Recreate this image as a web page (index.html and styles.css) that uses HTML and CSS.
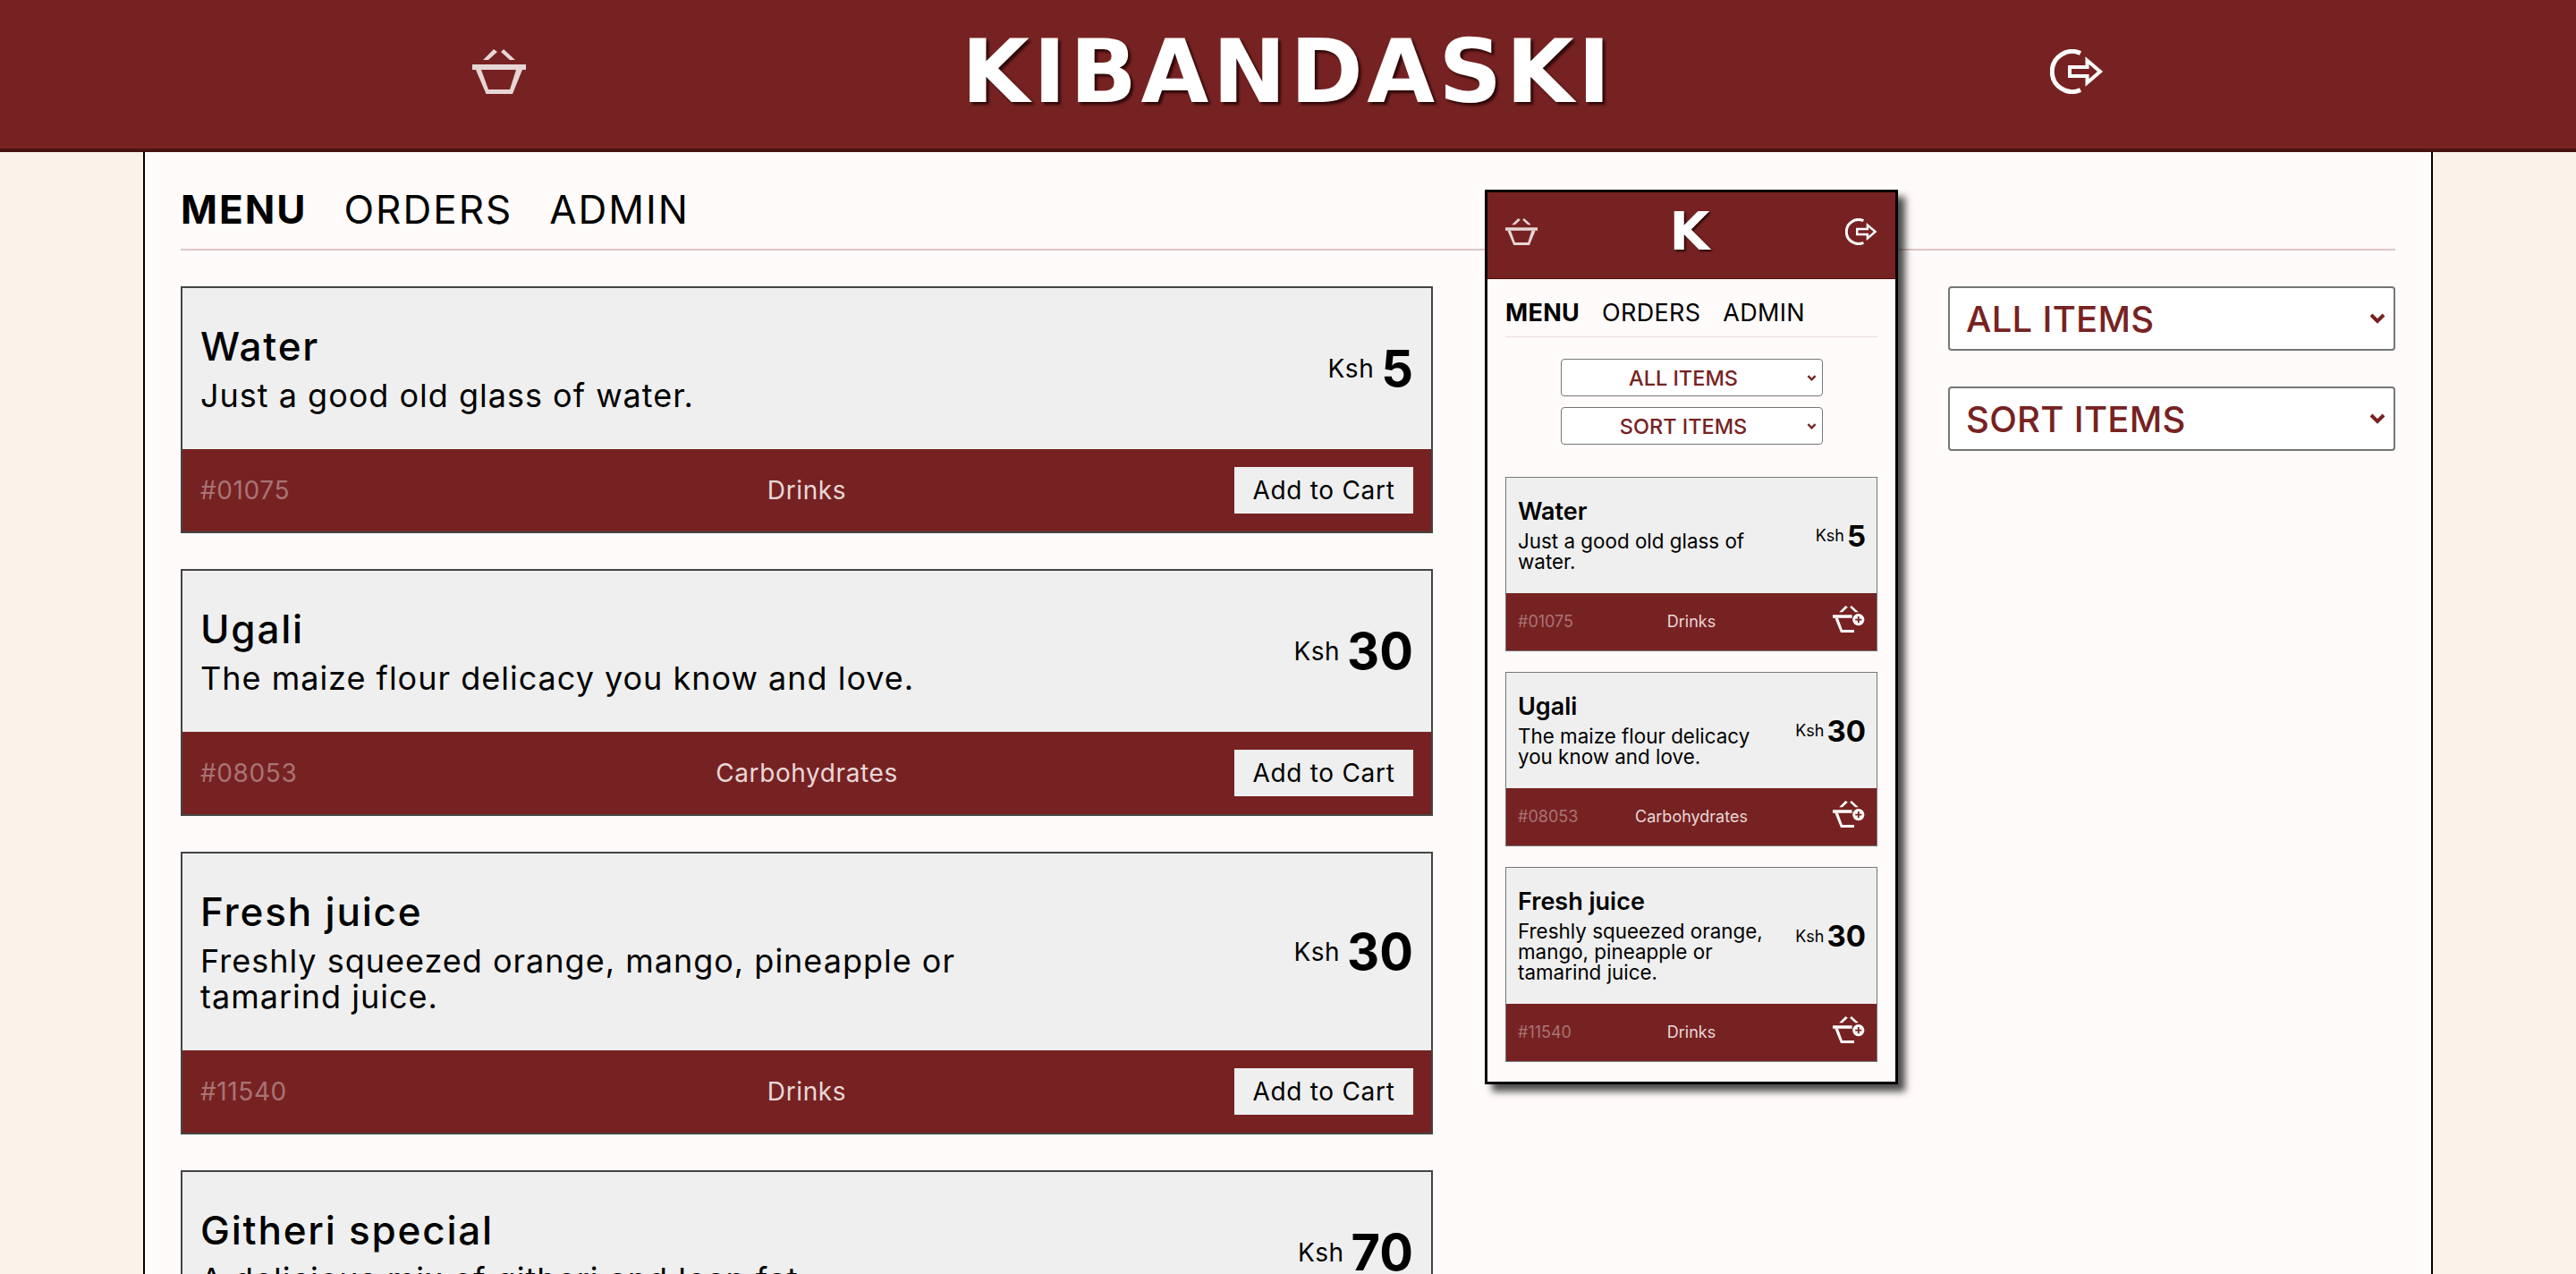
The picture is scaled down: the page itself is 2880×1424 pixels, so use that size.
FILE: index.html
```html
<!DOCTYPE html>
<html lang="en">
<head>
    <meta charset="UTF-8">
    <title>Kibandaski</title>
    <link rel="stylesheet" href="styles.css">
</head>
<body>
    <svg class="icon-defs" width="0" height="0">
        <symbol id="basket" viewBox="0 0 60 50">
            <path d="M12 12h6L28 3 24 0zM32 3l3-3 13 12h-6zM0 17h60v6H0z"/>
            <path fill-rule="evenodd" d="M4 23l11.500 27H45l11-27h-7l-7 22H18L10 23z"/>
        </symbol>
        <symbol id="basket-add" viewBox="0 0 60 50">
            <path d="M12 12h6L28 3 24 0zM32 3l3-3 13 12h-6zM0 17h36v6H0z"/>
            <path d="M4 23h6l8 22h22v5H15z"/>
            <circle cx="48" cy="26" r="11"/>
            <path class="plus" d="M46.500 20h3v4.500H54v3h-4.500V32h-3v-4.500H42v-3h4.500z"/>
        </symbol>
        <symbol id="exit" viewBox="0 0 60 50">
            <path class="line" d="M34 4.500A22.500 22.500 0 1 0 34 45.500"/>
            <path class="line thin" d="M22 20h19.500v-7.500L56 25 41.500 37.500V30H22z"/>
        </symbol>
    </svg>

    <header class="topbar">
        <svg class="topbar-icon dim"><use href="#basket"/></svg>
        <h1 class="logo">KIBANDASKI</h1>
        <svg class="topbar-icon"><use href="#exit"/></svg>
    </header>

    <div class="page">
        <nav class="tabs">
            <a class="active">MENU</a>
            <a>ORDERS</a>
            <a>ADMIN</a>
        </nav>

        <div class="columns">
            <main class="menu-list">
                <article class="card">
                    <div class="card-body">
                        <div class="card-text">
                            <h2>Water</h2>
                            <p>Just a good old glass of water.</p>
                        </div>
                        <div class="price"><span>Ksh</span><b>5</b></div>
                    </div>
                    <div class="card-foot">
                        <span class="code">#01075</span>
                        <span class="category">Drinks</span>
                        <button class="add-btn">Add to Cart</button>
                    </div>
                </article>
                <article class="card">
                    <div class="card-body">
                        <div class="card-text">
                            <h2>Ugali</h2>
                            <p>The maize flour delicacy you know and love.</p>
                        </div>
                        <div class="price"><span>Ksh</span><b>30</b></div>
                    </div>
                    <div class="card-foot">
                        <span class="code">#08053</span>
                        <span class="category">Carbohydrates</span>
                        <button class="add-btn">Add to Cart</button>
                    </div>
                </article>
                <article class="card">
                    <div class="card-body">
                        <div class="card-text">
                            <h2>Fresh juice</h2>
                            <p>Freshly squeezed orange, mango, pineapple or tamarind juice.</p>
                        </div>
                        <div class="price"><span>Ksh</span><b>30</b></div>
                    </div>
                    <div class="card-foot">
                        <span class="code">#11540</span>
                        <span class="category">Drinks</span>
                        <button class="add-btn">Add to Cart</button>
                    </div>
                </article>
                <article class="card">
                    <div class="card-body">
                        <div class="card-text">
                            <h2>Githeri special</h2>
                            <p>A delicious mix of githeri and lean fat.</p>
                        </div>
                        <div class="price"><span>Ksh</span><b>70</b></div>
                    </div>
                </article>
            </main>

            <aside class="filters">
                <select><option>ALL ITEMS</option></select>
                <select><option>SORT ITEMS</option></select>
            </aside>
        </div>

        <section class="phone">
            <div class="phone-bar">
                <svg class="phone-icon dim"><use href="#basket"/></svg>
                <span class="phone-logo">K</span>
                <svg class="phone-icon"><use href="#exit"/></svg>
            </div>
            <div class="phone-page">
                <nav class="phone-tabs">
                    <a class="active">MENU</a>
                    <a>ORDERS</a>
                    <a>ADMIN</a>
                </nav>
                <div class="phone-filters">
                    <select><option>ALL ITEMS</option></select>
                    <select><option>SORT ITEMS</option></select>
                </div>
                <div class="phone-list">
                    <article class="mini-card">
                        <div class="mini-body">
                            <div class="mini-text">
                                <h3>Water</h3>
                                <p>Just a good old glass of water.</p>
                            </div>
                            <div class="mini-price"><span>Ksh</span><b>5</b></div>
                        </div>
                        <div class="mini-foot">
                            <span class="code">#01075</span>
                            <span class="category">Drinks</span>
                            <svg class="mini-add"><use href="#basket-add"/></svg>
                        </div>
                    </article>
                    <article class="mini-card">
                        <div class="mini-body">
                            <div class="mini-text">
                                <h3>Ugali</h3>
                                <p>The maize flour delicacy you know and love.</p>
                            </div>
                            <div class="mini-price"><span>Ksh</span><b>30</b></div>
                        </div>
                        <div class="mini-foot">
                            <span class="code">#08053</span>
                            <span class="category">Carbohydrates</span>
                            <svg class="mini-add"><use href="#basket-add"/></svg>
                        </div>
                    </article>
                    <article class="mini-card">
                        <div class="mini-body">
                            <div class="mini-text">
                                <h3>Fresh juice</h3>
                                <p>Freshly squeezed orange, mango, pineapple or tamarind juice.</p>
                            </div>
                            <div class="mini-price"><span>Ksh</span><b>30</b></div>
                        </div>
                        <div class="mini-foot">
                            <span class="code">#11540</span>
                            <span class="category">Drinks</span>
                            <svg class="mini-add"><use href="#basket-add"/></svg>
                        </div>
                    </article>
                </div>
            </div>
        </section>
    </div>
</body>
</html>
```

FILE: styles.css
```css
body {
    margin: 0;
    height: 1424px;
    overflow: hidden;
    font-family: Inter, "Noto Sans", sans-serif;
    background: #fbf2e9;
    color: #000;
}

h1, h2, h3, p {
    margin: 0;
}

.icon-defs {
    position: absolute;
}

.line {
    fill: none;
    stroke: currentColor;
    stroke-width: 5;
}

.thin {
    stroke-width: 4;
}

.plus {
    fill: #772222;
}

/* top bar */
.topbar {
    box-sizing: border-box;
    height: 170px;
    padding: 0 528px 6px;
    display: flex;
    align-items: center;
    justify-content: space-between;
    background: #772222;
    border-bottom: 4px solid #4a1111;
    color: #fff;
    fill: #fff;
}

.topbar-icon {
    width: 60px;
    height: 50px;
}

.dim {
    fill: #e6d6d6;
}

.logo {
    font-family: "DejaVu Sans", sans-serif;
    font-size: 98px;
    line-height: 1;
    font-weight: 700;
    letter-spacing: 4.500px;
    text-shadow: 3px 3px 3px #2e0808;
}

/* page */
.page {
    position: relative;
    box-sizing: border-box;
    width: 2560px;
    height: 1254px;
    margin: 0 auto;
    padding: 36px 40px 0;
    background: #fffbfa;
    border-left: 2px solid #000;
    border-right: 2px solid #000;
    overflow: hidden;
}

.tabs {
    display: flex;
    gap: 41px;
    padding-bottom: 16px;
    margin-bottom: 40px;
    border-bottom: 2px solid #dcc6c6;
    font-size: 44px;
    line-height: 56px;
    letter-spacing: 2px;
}

.active {
    font-weight: 700;
}

.columns {
    display: flex;
    justify-content: space-between;
    align-items: flex-start;
}

.menu-list {
    width: 1400px;
    display: flex;
    flex-direction: column;
    gap: 40px;
}

/* menu cards */
.card {
    border: 2px solid #444;
    background: #772222;
}

.card-body {
    padding: 40px 20px;
    display: flex;
    justify-content: space-between;
    align-items: center;
    background: #efefef;
}

.card-text {
    width: 880px;
}

.card-text h2 {
    font-size: 44px;
    line-height: 50px;
    font-weight: 500;
    letter-spacing: 1.800px;
    margin-bottom: 10px;
}

.card-text p {
    font-size: 36px;
    line-height: 40px;
    letter-spacing: 1px;
}

.price {
    display: flex;
    align-items: center;
    gap: 8px;
    font-size: 28px;
    letter-spacing: 0.500px;
}

.price b {
    font-size: 56px;
    line-height: 60px;
    letter-spacing: 0;
}

.card-foot {
    padding: 20px;
    display: grid;
    grid-template-columns: 1fr auto 1fr;
    align-items: center;
    font-size: 28px;
    letter-spacing: 0.600px;
}

.code {
    color: #a87474;
}

.category {
    color: #e8d8d8;
}

.add-btn {
    justify-self: end;
    width: 200px;
    height: 52px;
    padding: 0;
    border: none;
    background: #efefef;
    color: #000;
    font-family: inherit;
    font-size: 28px;
    letter-spacing: 0.700px;
}

/* filters */
.filters {
    width: 500px;
    display: flex;
    flex-direction: column;
    gap: 40px;
}

select {
    height: 72px;
    padding: 0 18px;
    appearance: none;
    border: 2px solid #767676;
    border-radius: 4px;
    background: #fff url("data:image/svg+xml,%3Csvg xmlns='http://www.w3.org/2000/svg' viewBox='0 0 18 12'%3E%3Cpath d='M2 2l7 7 7-7' fill='none' stroke='%23772222' stroke-width='4'/%3E%3C/svg%3E") no-repeat right 9px center / 18px 12px;
    color: #772222;
    font-family: inherit;
    font-size: 40px;
    font-weight: 500;
    letter-spacing: 0.300px;
}

/* phone preview, sits over the page */
.phone {
    position: absolute;
    top: 42px;
    left: 1498px;
    box-sizing: border-box;
    width: 462px;
    height: 1000px;
    background: #fffbfa;
    border: 3px solid #000;
    box-shadow: 8px 8px 8px rgba(0, 0, 0, 0.7);
}

.phone-bar {
    box-sizing: border-box;
    height: 97px;
    padding: 0 20px 8px;
    display: flex;
    align-items: center;
    justify-content: space-between;
    background: #772222;
    border-bottom: 1px solid #4a1111;
    color: #fff;
    fill: #fff;
}

.phone-bar .dim {
    fill: #e6d6d6;
}

.phone-icon {
    width: 36px;
    height: 30px;
}

.phone-logo {
    margin-right: 4px;
    font-family: "DejaVu Sans", sans-serif;
    font-size: 58px;
    line-height: 1;
    font-weight: 700;
    text-shadow: 2px 2px 2px #2e0808;
}

.phone-page {
    padding: 22px 20px 0;
}

.phone-tabs {
    display: flex;
    gap: 25px;
    padding-bottom: 10px;
    margin-bottom: 24px;
    border-bottom: 1px solid #eadcdc;
    font-size: 27px;
    line-height: 32px;
    letter-spacing: 0.300px;
}

.phone-filters {
    display: flex;
    flex-direction: column;
    align-items: center;
    gap: 12px;
    margin-bottom: 36px;
}

.phone-filters select {
    width: 293px;
    height: 42px;
    padding: 0 24px 0 6px;
    border-width: 1px;
    background-position: right 6px center;
    background-size: 11px 7px;
    font-size: 23.500px;
    letter-spacing: 0;
    text-align-last: center;
}

.phone-list {
    display: flex;
    flex-direction: column;
    gap: 23px;
}

.mini-card {
    border: 1px solid #777;
    background: #772222;
}

.mini-body {
    padding: 24px 12px 23px 13px;
    display: flex;
    justify-content: space-between;
    align-items: center;
    background: #efefef;
}

.mini-text {
    width: 285px;
}

.mini-text h3 {
    font-size: 27px;
    line-height: 28px;
    font-weight: 600;
    margin-bottom: 7px;
}

.mini-text p {
    font-size: 22.400px;
    line-height: 23.400px;
}

.mini-price {
    display: flex;
    align-items: center;
    gap: 3px;
    font-size: 18px;
}

.mini-price b {
    font-size: 33px;
}

.mini-foot {
    box-sizing: border-box;
    height: 64px;
    padding: 0 13px;
    display: grid;
    grid-template-columns: 1fr auto 1fr;
    align-items: center;
    font-size: 18px;
}

.mini-add {
    justify-self: end;
    width: 36px;
    height: 30px;
    margin-bottom: 5px;
    fill: #fff;
}
```
